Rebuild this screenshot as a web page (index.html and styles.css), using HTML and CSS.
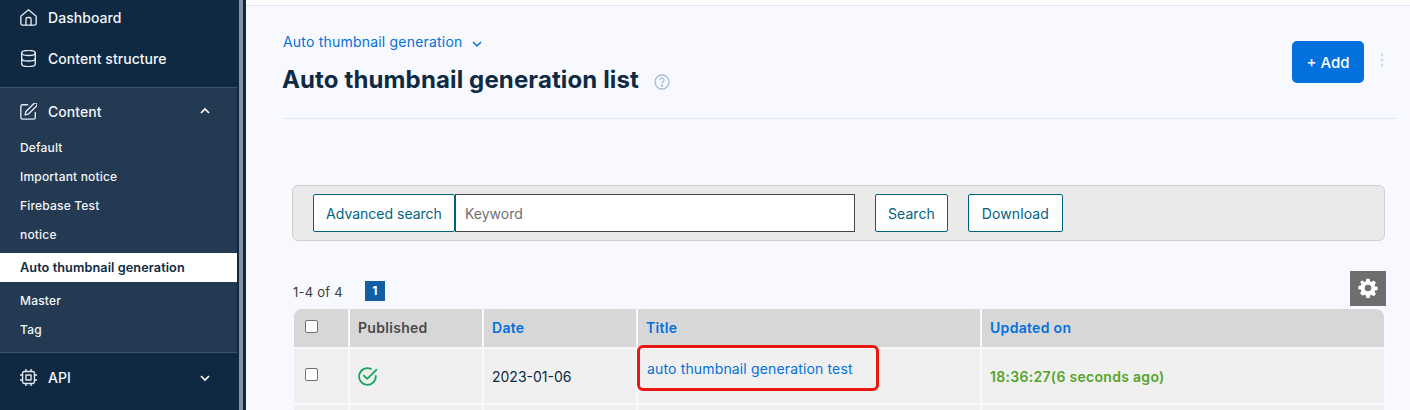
FILE: index.html
```html
<!DOCTYPE html>
<html lang="en">
<head>
<meta charset="utf-8">
<title>Auto thumbnail generation list</title>
<link rel="stylesheet" href="styles.css">
</head>
<body>
<div class="app">
  <aside class="sidebar">
    <nav class="nav-top">
      <a class="nav-item">
        <svg class="nav-icon" viewBox="2 2 20 20"><path d="M3 10.500 12 3l9 7.500V19a2 2 0 0 1-2 2H5a2 2 0 0 1-2-2z"/><path d="M9 21v-7a2 2 0 0 1 2-2h2a2 2 0 0 1 2 2v7"/></svg>
        <span>Dashboard</span>
      </a>
      <a class="nav-item">
        <svg class="nav-icon" viewBox="2 2 20 20"><ellipse cx="12" cy="5.500" rx="8" ry="3"/><path d="M4 5.500v13c0 1.700 3.600 3 8 3s8-1.300 8-3v-13"/><path d="M4 12c0 1.700 3.600 3 8 3s8-1.300 8-3"/></svg>
        <span>Content structure</span>
      </a>
    </nav>
    <section class="nav-group">
      <a class="nav-item nav-head">
        <svg class="nav-icon" viewBox="2 2 20 20"><path d="M11 4H5a2 2 0 0 0-2 2v13a2 2 0 0 0 2 2h13a2 2 0 0 0 2-2v-6"/><path d="M18.500 2.500a2.100 2.100 0 0 1 3 3L12 15l-4 1 1-4z"/></svg>
        <span class="grow">Content</span>
        <svg class="caret" viewBox="0 0 12 12"><path d="M2 8l4-4 4 4"/></svg>
      </a>
      <ul class="sub">
        <li>Default</li>
        <li>Important notice</li>
        <li>Firebase Test</li>
        <li>notice</li>
        <li class="active">Auto thumbnail generation</li>
        <li>Master</li>
        <li>Tag</li>
      </ul>
    </section>
    <nav>
      <a class="nav-item nav-api">
        <svg class="nav-icon" viewBox="2 2 20 20"><rect x="5" y="5" width="14" height="14" rx="2"/><rect x="9" y="9" width="6" height="6"/><path d="M9 2v3M15 2v3M9 19v3M15 19v3M2 9h3M2 15h3M19 9h3M19 15h3"/></svg>
        <span class="grow">API</span>
        <svg class="caret" viewBox="0 0 12 12"><path d="M2 4l4 4 4-4"/></svg>
      </a>
      <a class="nav-item nav-peek">
        <svg class="nav-icon" viewBox="2 2 20 20"><rect x="6" y="3" width="12" height="18" rx="2"/></svg>
      </a>
    </nav>
  </aside>
  <div class="rail"></div>
  <main class="main">
    <div class="topbar"></div>
    <header class="page-head">
      <div class="titles">
        <a class="crumb">Auto thumbnail generation
          <svg class="crumb-caret" viewBox="0 0 12 12"><path d="M2 4l4 4 4-4"/></svg>
        </a>
        <h1>Auto thumbnail generation list
          <svg class="help" viewBox="0 0 16 16"><circle cx="8" cy="8" r="7"/><path d="M6 6.200a2 2 0 1 1 3 1.700c-.7.400-1 .8-1 1.500"/><circle class="dot" cx="8" cy="11.700" r=".5"/></svg>
        </h1>
      </div>
      <button class="add">+ Add</button>
      <svg class="kebab" viewBox="0 0 4 14"><circle cx="2" cy="2" r="1.500"/><circle cx="2" cy="7" r="1.500"/><circle cx="2" cy="12" r="1.500"/></svg>
    </header>
    <form class="search">
      <button type="button" class="btn btn-adv">Advanced search</button>
      <input class="keyword" type="text" placeholder="Keyword">
      <button type="button" class="btn gap-l">Search</button>
      <button type="button" class="btn gap-l btn-dl">Download</button>
    </form>
    <div class="pager">
      <span class="count">1-4 of 4</span>
      <span class="page-num">1</span>
      <span class="gear">
        <svg viewBox="0 0 24 24"><path fill-rule="evenodd" d="M10 1h4l.5 3 1.800.8L18.800 3l2.800 2.800-1.800 2.500.8 1.800 3 .5v3.800l-3 .5-.8 1.800 1.800 2.500-2.800 2.800-2.500-1.800-1.800.8-.5 3h-4l-.5-3-1.800-.8L5.200 21l-2.800-2.800 1.800-2.500-.8-1.800-3-.5v-3.800l3-.5.8-1.800-1.800-2.500L5.200 3l2.500 1.800 1.800-.8zM12 8a4 4 0 1 0 0 8 4 4 0 0 0 0-8z"/></svg>
      </span>
    </div>
    <table class="list">
      <colgroup>
        <col class="c-check"><col class="c-pub"><col class="c-date"><col class="c-title"><col>
      </colgroup>
      <thead>
        <tr>
          <th class="first"><span class="check"></span></th>
          <th>Published</th>
          <th class="link">Date</th>
          <th class="link">Title</th>
          <th class="link last">Updated on</th>
        </tr>
      </thead>
      <tbody>
        <tr>
          <td class="ctr"><span class="check"></span></td>
          <td><svg class="ok" viewBox="1.500 1.500 18 18"><path d="M17.500 9.500V10a7.500 7.500 0 1 1-4.400-6.800"/><path d="M6.800 9.200l3 3L18 4"/></svg></td>
          <td class="date">2023-01-06</td>
          <td class="title-cell"><a class="title-link">auto thumbnail generation test</a><span class="mark"></span></td>
          <td class="updated">18:36:27(6 seconds ago)</td>
        </tr>
        <tr class="next"><td></td><td></td><td></td><td></td><td></td></tr>
      </tbody>
    </table>
  </main>
</div>
</body>
</html>
```
FILE: styles.css
```css
* { box-sizing: border-box; }
html, body { margin: 0; height: 410px; overflow: hidden; }
body { font-family: Inter, "Noto Sans", "Liberation Sans", sans-serif; background: #f8f9fe; color: #0f2a43; }
.app { display: flex; height: 410px; }

.sidebar { width: 239px; height: 410px; flex: none; background: #0f2942; color: #fff; padding-right: 2px; overflow: hidden; }
.rail { width: 7px; flex: none; background: #0f2942; border-left: 4px solid #8393a7; }
.nav-top { height: 87px; }
.nav-item { display: flex; align-items: center; gap: 11px; height: 40px; padding: 0 26px 0 20px; font-size: 14px; font-weight: 500; letter-spacing: .05px; color: #f4f6f9; }
.nav-top .nav-item:first-child { height: 35px; margin-bottom: 3px; }
.nav-top .nav-item:last-child { height: 41px; }
.nav-icon { width: 17px; height: 17px; flex: none; fill: none; stroke: #e4e8ed; stroke-width: 1.600; stroke-linecap: round; stroke-linejoin: round; }
.grow { flex: 1; }
.caret { width: 12px; height: 12px; fill: none; stroke: #fff; stroke-width: 1.700; }
.nav-group { background: #233a52; border-top: 1px solid #3f5368; border-bottom: 1px solid #3f5368; height: 266px; }
.nav-head { height: 45px; padding-top: 1px; }
.sub { list-style: none; margin: 0; padding: 0; font-size: 12px; font-weight: 500; letter-spacing: .18px; color: #f4f6f9; }
.sub li { height: 29px; line-height: 29px; padding-left: 20px; }
.sub .active { height: 29px; margin: 4px 0; background: #fff; color: #0f2a43; font-size: 12.700px; font-weight: 600; letter-spacing: .08px; }
.nav-api { height: 49px; }
.nav-peek { height: 32px; }

.main { flex: 1; min-width: 0; padding-right: 13px; }
.topbar { height: 6px; margin-right: -13px; background: #fff; border-bottom: 1px solid #dfe8f3; }
.page-head { display: flex; align-items: flex-start; margin-left: 36px; height: 113px; border-bottom: 1px solid #dfe8f3; padding: 26px 0 0 1px; }
.page-head .add { margin-top: 9px; }
.page-head .kebab { margin-top: 21px; }
.titles { flex: 1; }
.crumb { display: flex; align-items: center; gap: 8px; font-size: 14px; line-height: 20px; letter-spacing: .2px; color: #0270dd; }
.crumb-caret { width: 12px; height: 12px; fill: none; stroke: #0270dd; stroke-width: 1.500; margin-top: 3px; }
h1 { display: flex; align-items: center; gap: 15px; margin: 12px 0 0 -1px; font-size: 24px; line-height: 32px; font-weight: 700; letter-spacing: .13px; color: #0f2a43; }
.help { width: 16px; height: 16px; margin-top: 3px; fill: none; stroke: #a7bdd3; stroke-width: 1.300; }
.help .dot { fill: #a7bdd3; }
.add { width: 72px; height: 42px; border: 0; border-radius: 5px; background: #0270dd; color: #fff; font: 500 15px Inter, "Noto Sans", sans-serif; }
.kebab { width: 4px; height: 14px; margin: 0 13px 0 16px; fill: #d4dbe6; }

.search { display: flex; margin: 66px 12px 0 46px; height: 56px; padding: 8px 20px; background: #eaeaea; border: 1px solid #cfcfcf; border-radius: 6px; }
.btn { height: 38px; padding: 0 12px; background: #fff; border: 1px solid #00637f; border-radius: 2px; color: #00637f; font: 400 14px Inter, "Noto Sans", sans-serif; letter-spacing: .07px; }
.btn-adv { width: 142px; padding: 0; letter-spacing: 0; }
.btn-dl { width: 95px; padding: 0; letter-spacing: .12px; }
.keyword { width: 400px; height: 38px; padding: 0 9px; background: #fff; border: 1px solid #444; border-radius: 0; font: 400 14px Inter, "Noto Sans", sans-serif; }
.keyword::placeholder { color: #707070; }
.gap-l { margin-left: 20px; }

.pager { display: flex; align-items: center; height: 68px; margin: 0 12px 0 47px; padding-top: 34px; font-size: 13px; letter-spacing: .25px; color: #3b3b3b; }
.count { width: 72px; }
.page-num { width: 20px; height: 20px; line-height: 20px; margin-top: -2px; text-align: center; background: #105fa5; color: #fff; font-size: 12px; font-weight: 700; }
.gear { margin-left: auto; width: 36px; height: 35px; margin-top: -8px; margin-right: -1px; display: flex; align-items: center; justify-content: center; background: #6e6e6e; }
.gear svg { width: 20px; height: 20px; fill: #fff; }

.list { width: 1094px; margin-left: 46px; margin-top: -2px; border-collapse: separate; border-spacing: 2px; table-layout: fixed; font-size: 14px; }
.c-check { width: 54px; }
.c-pub { width: 132px; }
.c-date { width: 152px; }
.c-title { width: 342px; }
.list th { height: 38px; padding: 0 8px 2px; background: #d7d7d7; text-align: left; font-weight: 600; letter-spacing: .3px; color: #4a4a4a; }
.list th.first { border-top-left-radius: 8px; padding: 0 0 0 11px; }
.list th.last { border-top-right-radius: 8px; }
.list th.link { color: #0270dd; }
.list td { height: 54px; padding: 0 8px; background: #f0f0f0; position: relative; }
.list .next td { height: 20px; }
.list td.ctr { padding: 0 0 0 11px; }
.check { display: block; width: 13px; height: 13px; background: #fff; border: 1px solid #707070; border-radius: 2px; margin-top: -4px; }
.ok { display: block; width: 20px; height: 20px; margin-top: 2px; fill: none; stroke: #17a65c; stroke-width: 1.600; stroke-linecap: round; stroke-linejoin: round; }
.date { color: #0f2a43; }
.title-link { position: relative; top: -8px; left: 1px; letter-spacing: .15px; color: #0270dd; }
.mark { position: absolute; left: -1px; top: -4px; width: 242px; height: 46px; border: 3px solid #e8170f; border-radius: 6px; }
.updated { color: #54a52a; font-weight: 600; letter-spacing: .3px; }
```
